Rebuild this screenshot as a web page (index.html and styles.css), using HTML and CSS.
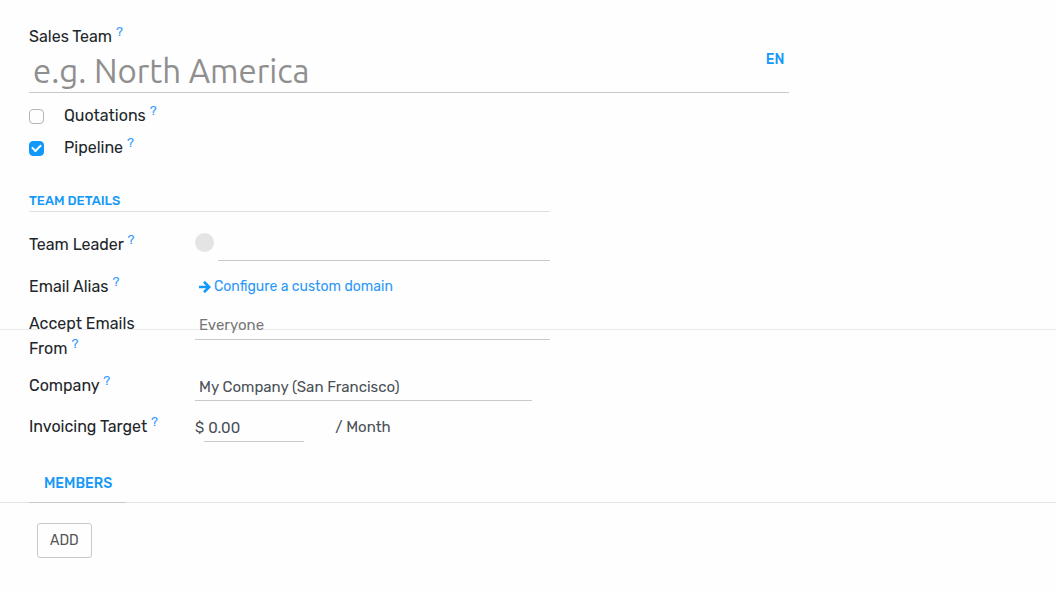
FILE: index.html
```html
<!DOCTYPE html>
<html lang="en">
<head>
<meta charset="utf-8">
<meta name="viewport" content="width=device-width, initial-scale=1">
<title>Sales Team</title>
<link rel="stylesheet" href="styles.css">
</head>
<body>
<form class="sheet">
  <section class="title">
    <label class="label" for="name">Sales Team <sup class="help">?</sup></label>
    <div class="title-field">
      <input class="title-input" id="name" type="text" placeholder="e.g. North America">
      <button class="lang" type="button">EN</button>
    </div>
    <div class="option">
      <input class="check" type="checkbox" id="quotations">
      <label class="label" for="quotations">Quotations <sup class="help">?</sup></label>
    </div>
    <div class="option">
      <input class="check" type="checkbox" id="pipeline" checked>
      <label class="label" for="pipeline">Pipeline <sup class="help">?</sup></label>
    </div>
  </section>

  <section class="details">
    <h2 class="heading">TEAM DETAILS</h2>
    <div class="fields">
      <label class="label" for="leader">Team Leader <sup class="help">?</sup></label>
      <div class="value leader">
        <span class="avatar"></span>
        <input class="input" id="leader" type="text">
      </div>

      <span class="label">Email Alias <sup class="help">?</sup></span>
      <div class="value">
        <a class="link" href="#">
          <svg class="arrow" viewBox="0 0 12 12" aria-hidden="true"><path d="M0 6h10M5 .8 10.200 6 5 11.200" fill="none" stroke="currentColor" stroke-width="2.700"/></svg>
          Configure a custom domain</a>
      </div>

      <label class="label" for="accept">Accept Emails From <sup class="help">?</sup></label>
      <div class="value">
        <select class="input muted" id="accept"><option>Everyone</option></select>
      </div>

      <label class="label" for="company">Company <sup class="help">?</sup></label>
      <div class="value company">
        <input class="input" id="company" type="text" value="My Company (San Francisco)">
      </div>

      <label class="label" for="target">Invoicing Target <sup class="help">?</sup></label>
      <div class="value target">
        <span>$</span>
        <input class="input amount" id="target" type="text" value="0.00">
        <span class="period">/ Month</span>
      </div>
    </div>
  </section>

  <div class="tabs"><button class="tab" type="button">MEMBERS</button></div>
  <div class="panel"><button class="add" type="button">ADD</button></div>
  <hr class="rule">
</form>
</body>
</html>
```
FILE: styles.css
```css
* { box-sizing: border-box; }
body {
  margin: 0;
  background: #fefefe;
  color: #212529;
  font: 15px/24px Rubik, Roboto, sans-serif;
}
input, select, button {
  margin: 0;
  border: 0;
  border-radius: 0;
  background: none;
  color: inherit;
  font: inherit;
  outline: 0;
}
.sheet { position: relative; padding-top: 24px; }
.title { width: 72%; margin-left: 29px; }
.label { font-size: 16px; line-height: 25px; }
.title > .label { display: block; height: 24px; line-height: 25px; }
.help {
  color: #3a9bff;
  font-size: 13px;
  line-height: 0;
  vertical-align: 6px;
}
.title-field {
  display: flex;
  align-items: flex-start;
  margin-bottom: 7px;
  border-bottom: 1px solid #c9c9c9;
}
.title-input {
  flex: 1;
  min-width: 0;
  height: 44px;
  padding: 1px 4px 0;
  font: 33px/43px Ubuntu, "Noto Sans", sans-serif;
}
.title-input::placeholder { color: #8f8f8f; opacity: 1; }
.lang { padding: 0 5px; color: #1598f8; font-size: 14px; font-weight: 500; }
.option { display: flex; align-items: center; gap: 20px; height: 32px; }
.option .label { padding-bottom: 2px; }
.check {
  appearance: none;
  display: grid;
  place-items: center;
  width: 15px;
  height: 15px;
  border: 1px solid #b4b4b4;
  border-radius: 4px;
}
.check:checked { border-color: #1099fb; background: #1099fb; }
.check:checked::after {
  content: "";
  width: 7px;
  height: 4px;
  margin-bottom: 2px;
  border: solid #fff;
  border-width: 0 0 2px 2px;
  rotate: -45deg;
}
.details { width: 550px; max-width: 100%; padding-left: 29px; margin-top: 24px; }
.heading {
  height: 24px;
  margin: 0 0 20px;
  border-bottom: 1px solid #dfdfdf;
  color: #1598f8;
  font-size: 13px;
  font-weight: 500;
  line-height: 25px;
}
.fields { display: grid; grid-template-columns: 126px 1fr; gap: 12px 40px; }
.fields > .label { white-space: nowrap; }
.fields > .label[for="accept"] { white-space: normal; }
.value { display: flex; align-items: flex-start; color: #495057; }
.input {
  appearance: none;
  flex: 1;
  min-width: 0;
  height: 28px;
  padding: 0 4px;
  border-bottom: 1px solid #c9c9c9;
}
.muted { height: 29px; padding-bottom: 1px; color: #777; }
.leader { gap: 4px; min-height: 30px; }
.leader .input { height: 29px; }
.avatar { width: 19px; height: 19px; margin-top: 1px; border-radius: 50%; background: #e4e4e4; }
.link {
  display: flex;
  align-items: center;
  gap: 3px;
  padding-left: 4px;
  color: #2b98f8;
  font-size: 14px;
  line-height: 25px;
  text-decoration: none;
}
.arrow { width: 12px; height: 12px; color: #1099fb; }
.company { padding-right: 18px; }
.company, .target { min-height: 29px; }
.target { line-height: 27px; }
.target .amount { flex: 0 0 100px; }
.period { margin-left: 31px; }
.tabs { height: 39px; margin-top: 21px; padding-left: 29px; border-bottom: 1px solid #e4e4e4; }
.tab { height: 39px; padding: 1px 14px 0 15px; border-bottom: 1px solid #c9c9c9; color: #1598f8; font-size: 14px; font-weight: 500; }
.panel { padding: 20px 37px; }
.add { display: block; height: 35px; padding: 0 12px; border: 1px solid #c9c9c9; border-radius: 3px; color: #555; font-size: 14px; }
.rule { position: absolute; z-index: -1; top: 329px; left: 0; right: 0; margin: 0; border: 0; border-top: 1px solid #e9e9e9; }
```
